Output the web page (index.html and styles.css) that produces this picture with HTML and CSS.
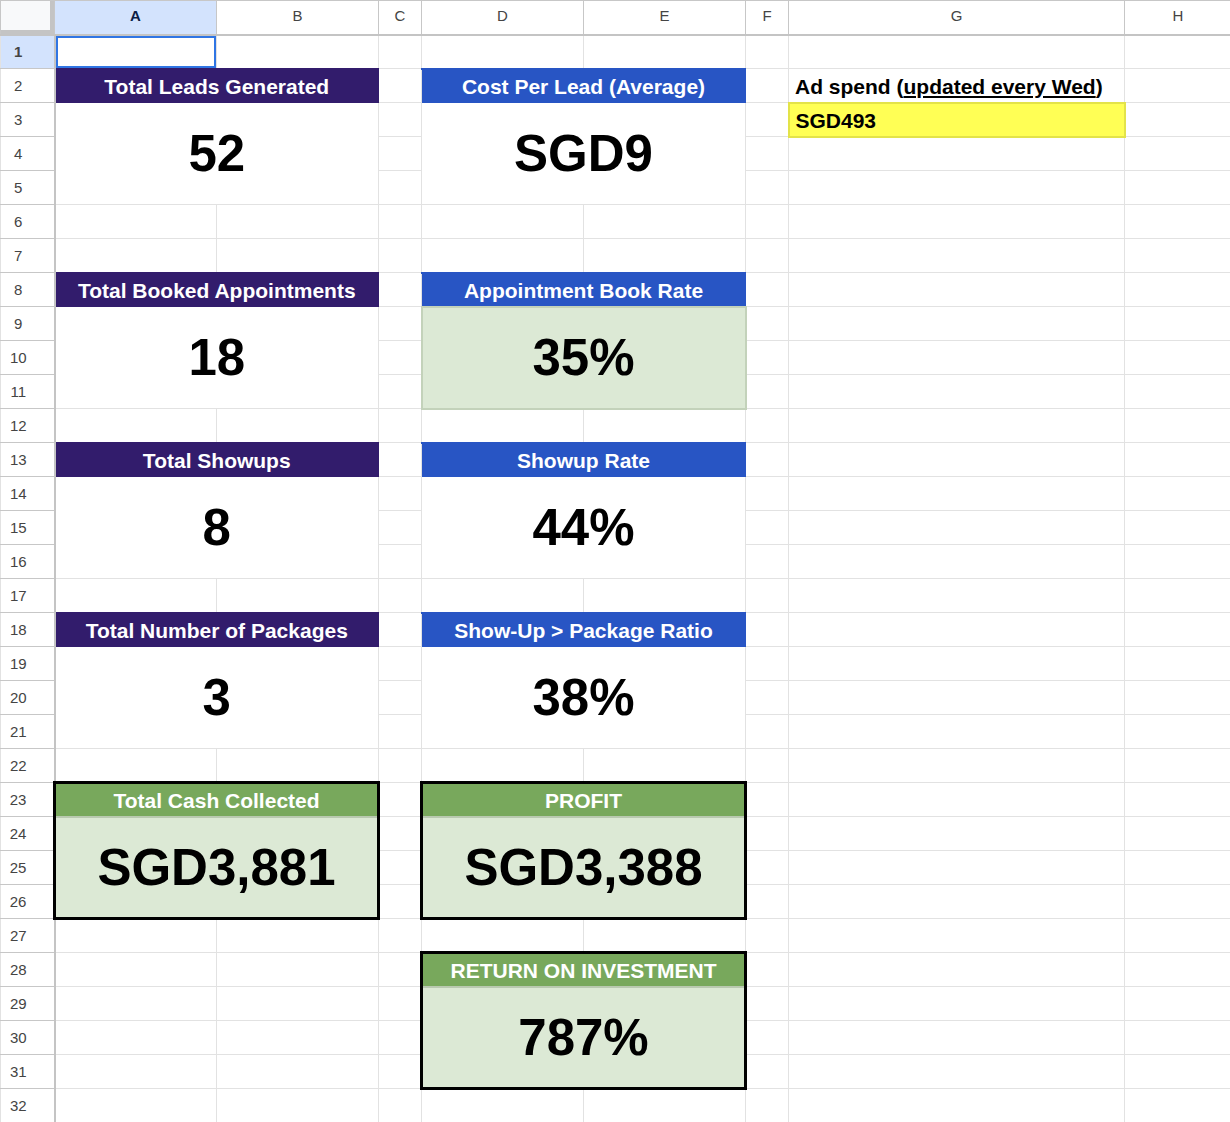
FILE: index.html
```html
<!DOCTYPE html>
<html lang="en">
<head>
    <meta charset="UTF-8">
    <meta name="viewport" content="width=device-width, initial-scale=1.0">
    <title>Lead Dashboard</title>
    <link rel="stylesheet" href="styles.css">
</head>
<body>
<table class="sheet">
    <colgroup>
        <col class="c-rh">
        <col class="c-wide">
        <col class="c-wide">
        <col class="c-gap">
        <col class="c-wide">
        <col class="c-wide">
        <col class="c-gap">
        <col class="c-note">
        <col class="c-last">
    </colgroup>
    <thead>
        <tr>
            <th class="corner"></th>
            <th class="on">A</th>
            <th>B</th>
            <th>C</th>
            <th>D</th>
            <th>E</th>
            <th>F</th>
            <th>G</th>
            <th>H</th>
        </tr>
    </thead>
    <tbody>
        <tr><td class="rh on">1</td><td class="sel"></td><td></td><td></td><td></td><td></td><td></td><td></td><td></td></tr>
        <tr>
            <td class="rh">2</td>
            <td colspan="2" class="title purple">Total Leads Generated</td>
            <td></td>
            <td colspan="2" class="title blue">Cost Per Lead (Average)</td>
            <td></td>
            <td class="note">Ad spend (<u>updated every Wed</u>)</td>
            <td></td>
        </tr>
        <tr>
            <td class="rh">3</td>
            <td colspan="2" rowspan="3" class="value">52</td>
            <td></td>
            <td colspan="2" rowspan="3" class="value">SGD9</td>
            <td></td>
            <td class="note yellow">SGD493</td>
            <td></td>
        </tr>
        <tr><td class="rh">4</td><td></td><td></td><td></td><td></td></tr>
        <tr><td class="rh">5</td><td></td><td></td><td></td><td></td></tr>
        <tr><td class="rh">6</td><td></td><td></td><td></td><td></td><td></td><td></td><td></td><td></td></tr>
        <tr><td class="rh">7</td><td></td><td></td><td></td><td></td><td></td><td></td><td></td><td></td></tr>
        <tr>
            <td class="rh">8</td>
            <td colspan="2" class="title purple">Total Booked Appointments</td>
            <td></td>
            <td colspan="2" class="title blue">Appointment Book Rate</td>
            <td></td><td></td><td></td>
        </tr>
        <tr>
            <td class="rh">9</td>
            <td colspan="2" rowspan="3" class="value">18</td>
            <td></td>
            <td colspan="2" rowspan="3" class="value filled">35%</td>
            <td></td><td></td><td></td>
        </tr>
        <tr><td class="rh">10</td><td></td><td></td><td></td><td></td></tr>
        <tr><td class="rh">11</td><td></td><td></td><td></td><td></td></tr>
        <tr><td class="rh">12</td><td></td><td></td><td></td><td></td><td></td><td></td><td></td><td></td></tr>
        <tr>
            <td class="rh">13</td>
            <td colspan="2" class="title purple">Total Showups</td>
            <td></td>
            <td colspan="2" class="title blue">Showup Rate</td>
            <td></td><td></td><td></td>
        </tr>
        <tr>
            <td class="rh">14</td>
            <td colspan="2" rowspan="3" class="value">8</td>
            <td></td>
            <td colspan="2" rowspan="3" class="value">44%</td>
            <td></td><td></td><td></td>
        </tr>
        <tr><td class="rh">15</td><td></td><td></td><td></td><td></td></tr>
        <tr><td class="rh">16</td><td></td><td></td><td></td><td></td></tr>
        <tr><td class="rh">17</td><td></td><td></td><td></td><td></td><td></td><td></td><td></td><td></td></tr>
        <tr>
            <td class="rh">18</td>
            <td colspan="2" class="title purple">Total Number of Packages</td>
            <td></td>
            <td colspan="2" class="title blue">Show-Up &gt; Package Ratio</td>
            <td></td><td></td><td></td>
        </tr>
        <tr>
            <td class="rh">19</td>
            <td colspan="2" rowspan="3" class="value">3</td>
            <td></td>
            <td colspan="2" rowspan="3" class="value">38%</td>
            <td></td><td></td><td></td>
        </tr>
        <tr><td class="rh">20</td><td></td><td></td><td></td><td></td></tr>
        <tr><td class="rh">21</td><td></td><td></td><td></td><td></td></tr>
        <tr><td class="rh">22</td><td></td><td></td><td></td><td></td><td></td><td></td><td></td><td></td></tr>
        <tr>
            <td class="rh">23</td>
            <td colspan="2" class="title box-head">Total Cash Collected</td>
            <td></td>
            <td colspan="2" class="title box-head">PROFIT</td>
            <td></td><td></td><td></td>
        </tr>
        <tr>
            <td class="rh">24</td>
            <td colspan="2" rowspan="3" class="value box-val">SGD3,881</td>
            <td></td>
            <td colspan="2" rowspan="3" class="value box-val">SGD3,388</td>
            <td></td><td></td><td></td>
        </tr>
        <tr><td class="rh">25</td><td></td><td></td><td></td><td></td></tr>
        <tr><td class="rh">26</td><td></td><td></td><td></td><td></td></tr>
        <tr><td class="rh">27</td><td></td><td></td><td></td><td></td><td></td><td></td><td></td><td></td></tr>
        <tr>
            <td class="rh">28</td>
            <td></td><td></td><td></td>
            <td colspan="2" class="title box-head">RETURN ON INVESTMENT</td>
            <td></td><td></td><td></td>
        </tr>
        <tr>
            <td class="rh">29</td>
            <td></td><td></td><td></td>
            <td colspan="2" rowspan="3" class="value box-val">787%</td>
            <td></td><td></td><td></td>
        </tr>
        <tr><td class="rh">30</td><td></td><td></td><td></td><td></td><td></td><td></td></tr>
        <tr><td class="rh">31</td><td></td><td></td><td></td><td></td><td></td><td></td></tr>
        <tr><td class="rh">32</td><td></td><td></td><td></td><td></td><td></td><td></td><td></td><td></td></tr>
    </tbody>
</table>
</body>
</html>
```

FILE: styles.css
```css
body {
    margin: 0;
    font-family: "Liberation Sans", Arial, sans-serif;
    background-color: #fff;
    overflow: hidden;
}
.sheet {
    border-collapse: collapse;
    table-layout: fixed;
    width: 1230px;
}
.c-rh { width: 54px; }
.c-wide { width: 162px; }
.c-gap { width: 43px; }
.c-note { width: 336px; }
.c-last { width: 107px; }

.sheet th,
.sheet td {
    border: 1px solid #e2e2e2;
    padding: 0;
    white-space: nowrap;
    overflow: visible;
}
.sheet thead tr {
    height: 34px;
}
.sheet tbody tr {
    height: 34px;
}
.sheet th {
    font-weight: normal;
    font-size: 15px;
    color: #444;
    border-color: #c7c7c7;
    border-bottom: 2px solid #c4c4c4;
    padding-bottom: 3px;
}
.sheet th.corner {
    background-color: #f8f9fa;
    box-shadow: inset -4px -4px 0 #c4c4c4;
}
.sheet .on {
    background-color: #d3e3fd;
    color: #0b1d45;
    font-weight: bold;
}
.sheet .rh {
    font-size: 15px;
    color: #444;
    text-align: center;
    padding-right: 18px;
    border-right: 2px solid #c4c4c4;
    border-top-color: #c7c7c7;
    border-bottom-color: #c7c7c7;
}
.sheet .sel {
    box-shadow: inset 0 0 0 2px #2f75e4;
}

/* card headers */
.sheet .title {
    text-align: center;
    vertical-align: middle;
    font-size: 21px;
    font-weight: bold;
    color: #fff;
    padding-top: 2px;
}
.sheet .purple {
    background-color: #321c6c;
    border-color: #321c6c;
    border-top: 2px solid #321c6c;
}
.sheet .blue {
    background-color: #2855c4;
    border-color: #2855c4;
    border-top: 2px solid #2855c4;
}
.sheet .box-head {
    background-color: #78a85c;
    border: 3px solid #000;
    border-bottom: 2px solid #b9c9b0;
}

/* card values */
.sheet .value {
    text-align: center;
    vertical-align: middle;
    font-size: 51px;
    font-weight: bold;
    color: #000;
}
.sheet .filled {
    background-color: #dce9d5;
    border: 2px solid #c3d2ba;
}
.sheet .box-val {
    background-color: #dce9d5;
    border: 3px solid #000;
    border-top: none;
}

/* ad spend note */
.sheet .note {
    font-size: 21px;
    font-weight: bold;
    color: #000;
    vertical-align: bottom;
    padding: 0 0 3px 6px;
}
.note u {
    text-underline-offset: 2px;
}
.sheet .yellow {
    background-color: #ffff55;
    border: 2px solid #e3e349;
}
```
